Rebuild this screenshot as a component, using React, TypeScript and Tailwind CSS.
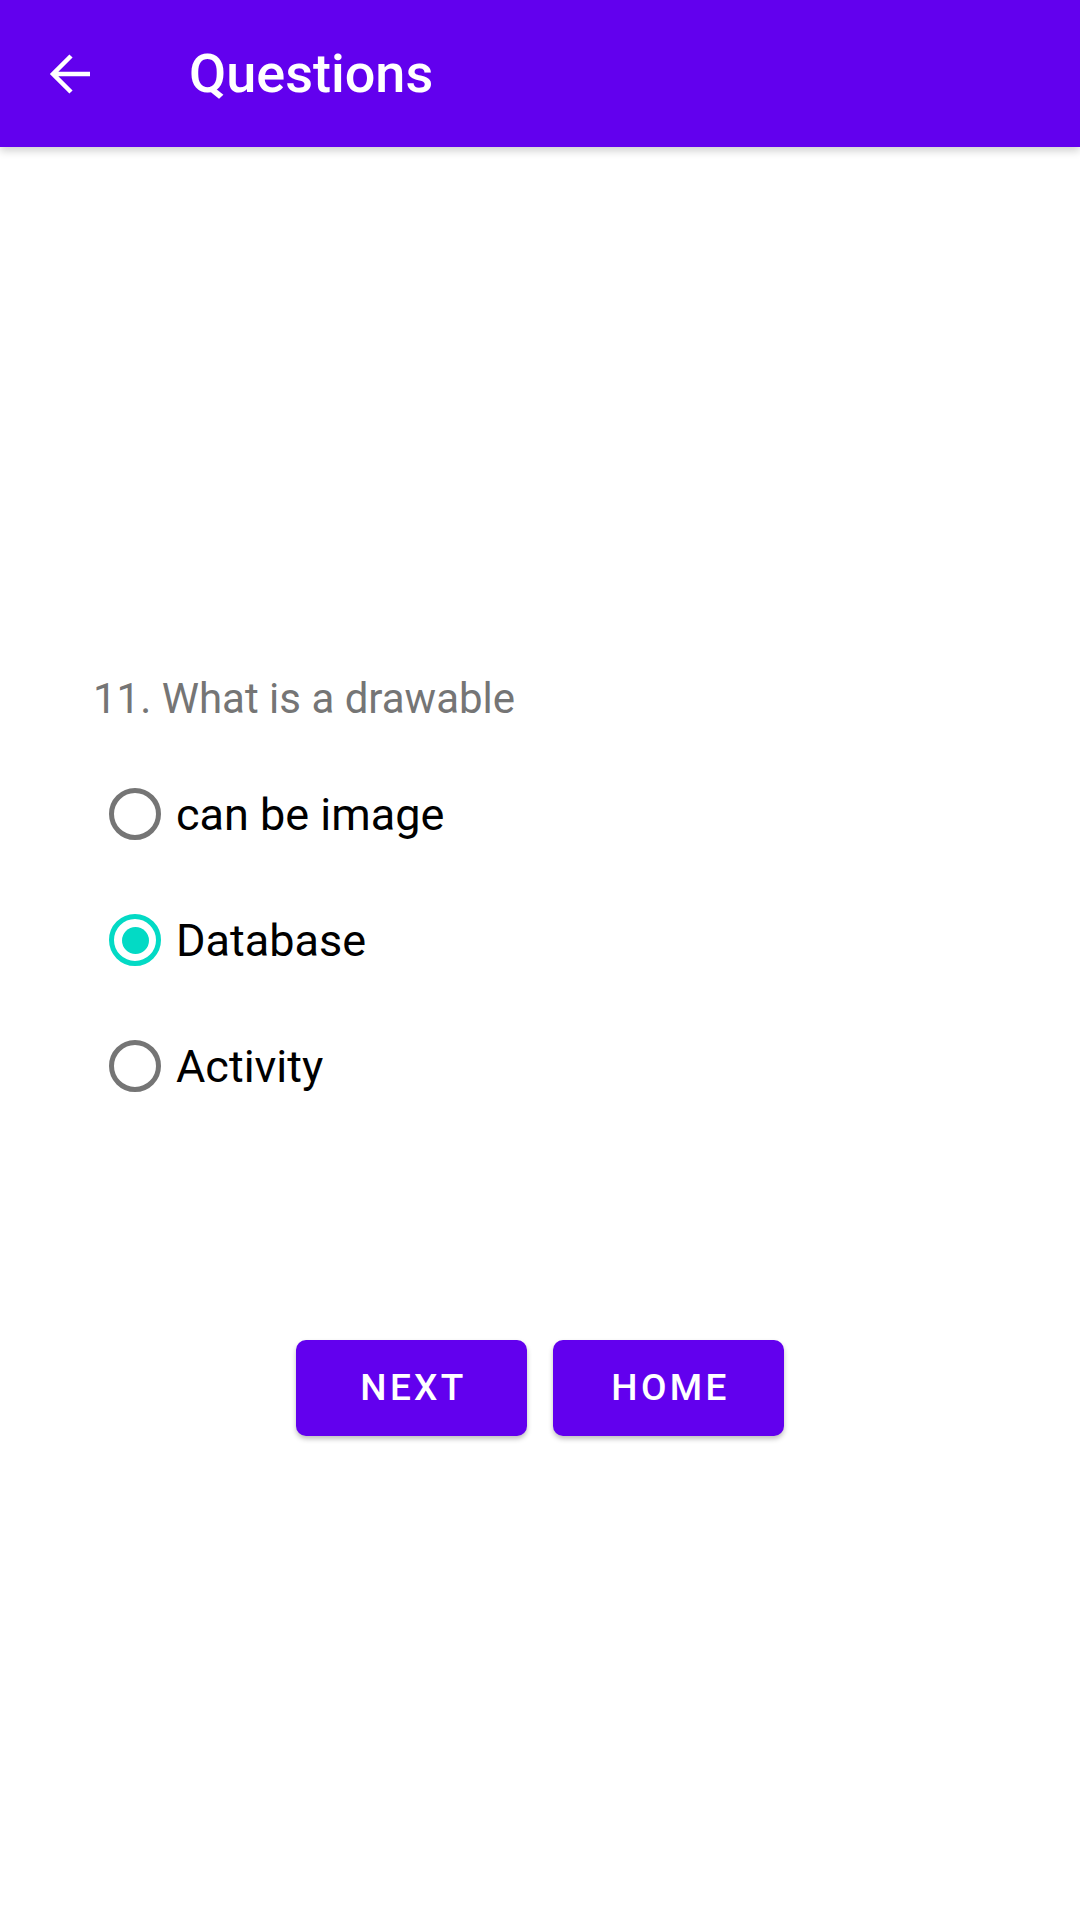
import React, { useState } from 'react';

const options = ['can be image', 'Database', 'Activity'];

function Radio({ checked }: { checked: boolean }) {
  return (
    <div
      className={
        checked
          ? 'w-[52px] h-[52px] rounded-full border-[5px] border-[#03dac5] flex items-center justify-center shrink-0'
          : 'w-[52px] h-[52px] rounded-full border-[5px] border-[#757575] flex items-center justify-center shrink-0'
      }
    >
      {checked && <div className="w-[27px] h-[27px] rounded-full bg-[#03dac5]" />}
    </div>
  );
}

export default function App() {
  const [selected, setSelected] = useState(1);

  return (
    <div className="w-[1080px] h-[1920px] bg-white font-['Roboto',sans-serif] flex flex-col">
      <div className="h-[147px] bg-[#6200ee] flex items-center shadow-[0_4px_8px_rgba(0,0,0,0.18)] relative z-10">
        <svg className="ml-[48px]" width="44" height="44" viewBox="0 0 44 44" fill="none" stroke="white" strokeWidth="4.5">
          <path d="M42 22H5M23 4L5 22l18 18" />
        </svg>
        <span className="ml-[97px] text-white text-[54px] font-medium leading-none">Questions</span>
      </div>

      <div className="flex flex-col pl-[93px] pt-[527px]">
        <div className="text-[42px] leading-[49px] text-[#757575]">11. What is a drawable</div>
        <div className="flex flex-col mt-[28px] pl-[16px]">
          {options.map((o, i) => (
            <div
              key={o}
              className="h-[126px] flex items-center gap-[15px] cursor-pointer"
              onClick={() => setSelected(i)}
            >
              <Radio checked={selected === i} />
              <span className="text-[45px] text-black leading-none">{o}</span>
            </div>
          ))}
        </div>
      </div>

      <div className="flex justify-center gap-[26px] mt-[211px]">
        <button className="w-[231px] h-[96px] rounded-[10px] bg-[#6200ee] text-white text-[37px] font-medium tracking-[0.09em] pl-[4px] shadow-[0_3px_5px_rgba(0,0,0,0.25)]">
          NEXT
        </button>
        <button className="w-[231px] h-[96px] rounded-[10px] bg-[#6200ee] text-white text-[37px] font-medium tracking-[0.09em] pl-[4px] shadow-[0_3px_5px_rgba(0,0,0,0.25)]">
          HOME
        </button>
      </div>
    </div>
  );
}
